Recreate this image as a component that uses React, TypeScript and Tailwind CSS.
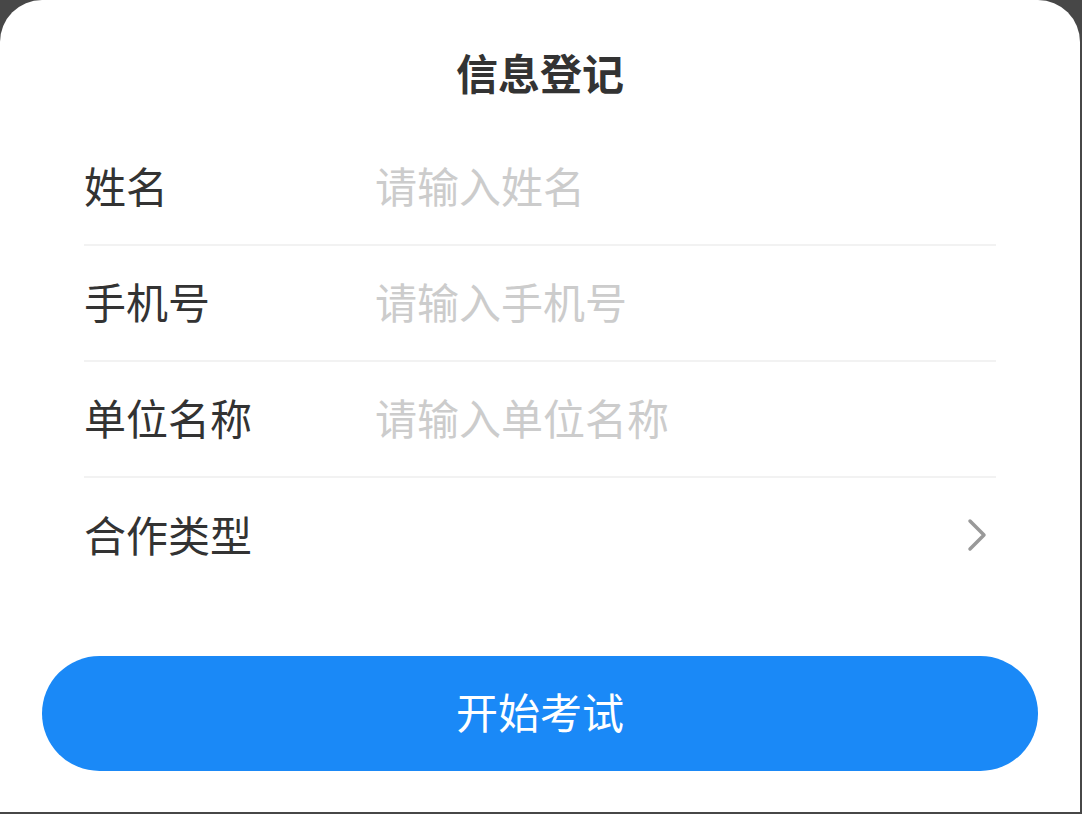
import React from "react";

const fields = [
  { label: "姓名", placeholder: "请输入姓名" },
  { label: "手机号", placeholder: "请输入手机号" },
  { label: "单位名称", placeholder: "请输入单位名称" },
];

export default function App() {
  return (
    <div
      className="w-[1082px] h-[814px] bg-[#474747] overflow-hidden"
      style={{ fontFamily: '"Noto Sans CJK SC", "Noto Sans", sans-serif' }}
    >
      <div className="w-[1080px] h-[812px] bg-white rounded-t-[42px] flex flex-col">
        <h1 className="pt-[42px] h-[104px] text-center text-[42px] leading-[60px] font-bold text-[#333333]">
          信息登记
        </h1>
        <div className="px-[84px] pt-[26px]">
          {fields.map((f) => (
            <div key={f.label} className="flex items-center h-[116px] border-b-2 border-[#f2f2f2]">
              <span className="w-[291px] shrink-0 mb-[6px] text-[42px] text-[#333333]">{f.label}</span>
              <input
                className="flex-1 mb-[6px] text-[42px] text-[#333333] placeholder:text-[#cccccc] outline-none bg-transparent"
                placeholder={f.placeholder}
              />
            </div>
          ))}
          <div className="flex items-center h-[116px]">
            <span className="w-[291px] shrink-0 mb-[6px] text-[42px] text-[#333333]">合作类型</span>
            <div className="flex-1" />
            <svg width="24" height="40" viewBox="0 0 24 40" className="mr-[6px] mb-[2px]">
              <path d="M4 6 L18 20 L4 34" fill="none" stroke="#999999" strokeWidth="3.5" strokeLinecap="round" strokeLinejoin="round" />
            </svg>
          </div>
        </div>
        <div className="px-[42px] mt-[62px]">
          <button className="w-full h-[115px] pb-[6px] rounded-full bg-[#1a89f7] text-white text-[42px]">
            开始考试
          </button>
        </div>
      </div>
    </div>
  );
}
